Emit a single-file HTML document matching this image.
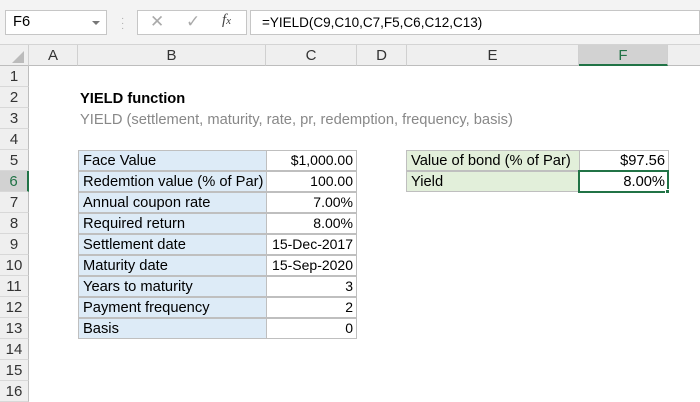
<!DOCTYPE html><html><head><style>
*{margin:0;padding:0;box-sizing:border-box}
body{width:700px;height:400px;overflow:hidden;background:#fff;font-family:"Liberation Sans",Calibri,sans-serif;font-size:14.7px;color:#000;position:relative}
.a{position:absolute}
.tb{left:0;top:0;width:700px;height:45px;background:#f3f3f3;border-bottom:1px solid #d4d4d4}
.ch{top:45px;height:21px;background:#efefef;border-right:1px solid #d0d0d0;border-bottom:1px solid #bdbdbd;text-align:center;line-height:21px;color:#333;font-size:15px}
.rh{left:0;width:29px;height:21px;background:#efefef;border-right:1px solid #bdbdbd;border-bottom:1px solid #d8d8d8;text-align:center;line-height:21px;color:#333;font-size:15px}
.c{height:21px;line-height:20px;padding:0 3px 0 4px;border:1px solid #bfbfbf;white-space:nowrap}
.b{background:#ddebf7;left:78px;width:189px}
.v{left:266px;width:91px;text-align:right;font-size:14px;line-height:18px}
</style></head><body>
<div class="a tb"></div>
<div class="a" style="left:5px;top:10px;width:102px;height:25px;background:#fff;border:1px solid #c6c6c6;line-height:23px;padding-left:7px">F6</div>
<div class="a" style="left:92px;top:21px;width:0;height:0;border-left:4px solid transparent;border-right:4px solid transparent;border-top:4px solid #777"></div>
<div class="a" style="left:121px;top:16px;color:#aaa;font-size:10px;line-height:5px">·<br>·<br>·</div>
<div class="a" style="left:137px;top:10px;width:110px;height:25px;background:#fff;border:1px solid #c6c6c6"></div>
<div class="a" style="left:150px;top:12px;color:#aaa;font-size:17px">✕</div>
<div class="a" style="left:186px;top:12px;color:#aaa;font-size:17px">✓</div>
<div class="a" style="left:222px;top:12px;color:#444;font-size:15px;font-style:italic;font-family:'Liberation Serif',serif">f<span style="font-size:11px">x</span></div>
<div class="a" style="left:250px;top:10px;width:450px;height:25px;background:#fff;border:1px solid #c6c6c6;line-height:23px;padding-left:11px;font-size:13.5px">=YIELD(C9,C10,C7,F5,C6,C12,C13)</div>
<div class="a ch" style="left:0;width:29px"></div>
<div class="a" style="left:12px;top:51px;width:0;height:0;border-left:12px solid transparent;border-bottom:12px solid #bbb"></div>
<div class="a ch" style="left:29px;width:49px">A</div>
<div class="a ch" style="left:78px;width:188px">B</div>
<div class="a ch" style="left:266px;width:91px">C</div>
<div class="a ch" style="left:357px;width:50px">D</div>
<div class="a ch" style="left:407px;width:172px">E</div>
<div class="a ch" style="left:579px;width:89px;background:#d2d2d2;border-bottom:2px solid #217346;color:#217346">F</div>
<div class="a ch" style="left:668px;width:40px"></div>
<div class="a rh" style="top:66px">1</div><div class="a rh" style="top:87px">2</div><div class="a rh" style="top:108px">3</div><div class="a rh" style="top:129px">4</div><div class="a rh" style="top:150px">5</div>
<div class="a rh" style="top:171px;background:#d2d2d2;border-right:2px solid #217346;color:#217346">6</div>
<div class="a rh" style="top:192px">7</div><div class="a rh" style="top:213px">8</div><div class="a rh" style="top:234px">9</div><div class="a rh" style="top:255px">10</div><div class="a rh" style="top:276px">11</div><div class="a rh" style="top:297px">12</div><div class="a rh" style="top:318px">13</div><div class="a rh" style="top:339px">14</div><div class="a rh" style="top:360px">15</div><div class="a rh" style="top:381px">16</div>
<div class="a" style="left:80px;top:89px;font-weight:bold;line-height:21px">YIELD function</div>
<div class="a" style="left:80px;top:110px;color:#888;line-height:21px">YIELD (settlement, maturity, rate, pr, redemption, frequency, basis)</div>
<div class="a c b" style="top:150px">Face Value</div><div class="a c v" style="top:150px">$1,000.00</div>
<div class="a c b" style="top:171px">Redemtion value (% of Par)</div><div class="a c v" style="top:171px">100.00</div>
<div class="a c b" style="top:192px">Annual coupon rate</div><div class="a c v" style="top:192px">7.00%</div>
<div class="a c b" style="top:213px">Required return</div><div class="a c v" style="top:213px">8.00%</div>
<div class="a c b" style="top:234px">Settlement date</div><div class="a c v" style="top:234px">15-Dec-2017</div>
<div class="a c b" style="top:255px">Maturity date</div><div class="a c v" style="top:255px">15-Sep-2020</div>
<div class="a c b" style="top:276px">Years to maturity</div><div class="a c v" style="top:276px">3</div>
<div class="a c b" style="top:297px">Payment frequency</div><div class="a c v" style="top:297px">2</div>
<div class="a c b" style="top:318px">Basis</div><div class="a c v" style="top:318px">0</div>
<div class="a c" style="left:406px;width:174px;top:150px;background:#e2efda">Value of bond (% of Par)</div>
<div class="a c" style="left:579px;width:90px;top:150px;text-align:right">$97.56</div>
<div class="a c" style="left:406px;width:174px;top:171px;background:#e2efda">Yield</div>
<div class="a c" style="left:578px;width:91px;top:170px;height:23px;text-align:right;border:2px solid #217346;line-height:20px;padding-right:2px">8.00%</div>
<div class="a" style="left:665px;top:189px;width:5px;height:5px;background:#217346;border:1px solid #fff"></div>
</body></html>
